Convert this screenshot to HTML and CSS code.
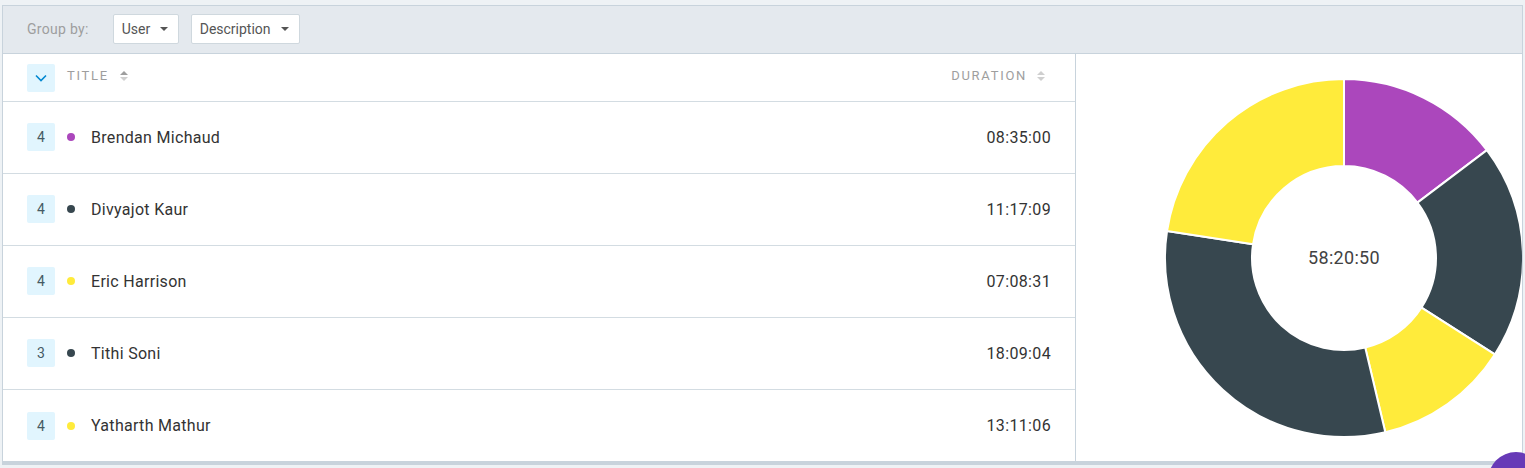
FILE: index.html
```html
<!DOCTYPE html>
<html>
<head>
<meta charset="utf-8">
<link rel="stylesheet" href="styles.css">
</head>
<body>
<div class="app">
  <div class="toolbar">
    <span class="group-label">Group by:</span>
    <div class="select select-user"><span>User</span><span class="caret"></span></div>
    <div class="select"><span>Description</span><span class="caret"></span></div>
  </div>
  <div class="main">
    <div class="table">
      <div class="head">
        <div class="toggle">
          <svg width="12" height="8" viewBox="0 0 12 8"><path d="M1 1.5 L6 6.5 L11 1.5" fill="none" stroke="#0288d1" stroke-width="1.6"/></svg>
        </div>
        <span class="col-title">TITLE</span>
        <span class="sort"><span class="up dark"></span><span class="down"></span></span>
        <span class="spacer"></span>
        <span class="col-dur">DURATION</span>
        <span class="sort"><span class="up"></span><span class="down"></span></span>
      </div>
      <div class="row">
        <span class="badge">4</span><span class="dot purple"></span><span class="name">Brendan Michaud</span><span class="dur">08:35:00</span>
      </div>
      <div class="row">
        <span class="badge">4</span><span class="dot dark"></span><span class="name">Divyajot Kaur</span><span class="dur">11:17:09</span>
      </div>
      <div class="row">
        <span class="badge">4</span><span class="dot yellow"></span><span class="name">Eric Harrison</span><span class="dur">07:08:31</span>
      </div>
      <div class="row">
        <span class="badge">3</span><span class="dot dark"></span><span class="name">Tithi Soni</span><span class="dur">18:09:04</span>
      </div>
      <div class="row last">
        <span class="badge">4</span><span class="dot yellow"></span><span class="name">Yatharth Mathur</span><span class="dur">13:11:06</span>
      </div>
    </div>
    <div class="chart">
      <div class="donut">
        <svg width="360" height="360" viewBox="0 0 360 360">
          <g stroke="#ffffff" stroke-width="2" stroke-linejoin="round">
            <path fill="#ab47bc" d="M180,1 A179,179 0 0 1 322.88,72.17 L253.43,124.58 A92,92 0 0 0 180,88 Z"/>
            <path fill="#37474f" d="M322.88,72.17 A179,179 0 0 1 330.81,276.42 L257.51,229.55 A92,92 0 0 0 253.43,124.58 Z"/>
            <path fill="#ffeb3b" d="M330.81,276.42 A179,179 0 0 1 221.31,354.17 L201.23,269.52 A92,92 0 0 0 257.51,229.55 Z"/>
            <path fill="#37474f" d="M221.31,354.17 A179,179 0 0 1 3.04,153.08 L89.05,166.17 A92,92 0 0 0 201.23,269.52 Z"/>
            <path fill="#ffeb3b" d="M3.04,153.08 A179,179 0 0 1 180,1 L180,88 A92,92 0 0 0 89.05,166.17 Z"/>
          </g>
        </svg>
        <span class="total">58:20:50</span>
      </div>
    </div>
  </div>
</div>
<div class="fab"></div>
</body>
</html>
```

FILE: styles.css
```css
html, body {
  margin: 0;
  padding: 0;
  background: #eef2f5;
  font-family: Roboto, "Liberation Sans", sans-serif;
  overflow: hidden;
}
.app {
  margin: 5px 0 0 2px;
  width: 1521px;
  box-sizing: border-box;
  border: 1px solid #c8d3dc;
  border-bottom: 4px solid #c8d3dc;
  background: #fff;
}
.toolbar {
  height: 48px;
  box-sizing: border-box;
  background: #e4e9ee;
  border-bottom: 1px solid #c8d3dc;
  display: flex;
  align-items: center;
  padding: 0 0 1px 24px;
}
.group-label {
  font-size: 14px;
  letter-spacing: 0.3px;
  color: #9e9e9e;
  margin-right: 24px;
}
.select {
  height: 30px;
  box-sizing: border-box;
  border: 1px solid #cfd8de;
  border-radius: 2px;
  background: #fff;
  display: flex;
  align-items: center;
  padding: 0 10px 0 8px;
  font-size: 14px;
  color: #555;
  margin-right: 12px;
}
.select-user { width: 66px; }
.caret {
  width: 0;
  height: 0;
  border-left: 4px solid transparent;
  border-right: 4px solid transparent;
  border-top: 4px solid #555;
  margin-left: auto;
}
.select span:first-child { margin-right: 10px; }
.main {
  display: flex;
  height: 407px;
}
.table {
  width: 1073px;
  flex: none;
  box-sizing: border-box;
  border-right: 1px solid #c8d3dc;
  background: #fff;
}
.head {
  height: 48px;
  box-sizing: border-box;
  border-bottom: 1px solid #d3dce2;
  display: flex;
  align-items: center;
  padding: 0 30px 0 24px;
}
.toggle {
  width: 28px;
  height: 28px;
  border-radius: 2px;
  background: #e1f5fe;
  display: flex;
  align-items: center;
  justify-content: center;
  margin-right: 12px;
}
.toggle svg { display: block; }
.col-title, .col-dur {
  font-size: 13px;
  letter-spacing: 1.7px;
  color: #9e9e9e;
  margin-bottom: 4px;
}
.sort {
  display: inline-flex;
  flex-direction: column;
  gap: 2px;
  margin-left: 10px;
  margin-bottom: 4px;
}
.sort .up, .sort .down {
  width: 0;
  height: 0;
  border-left: 4px solid transparent;
  border-right: 4px solid transparent;
}
.sort .up { border-bottom: 4px solid #cfcfcf; }
.sort .up.dark { border-bottom-color: #9e9e9e; }
.sort .down { border-top: 4px solid #cfcfcf; }
.col-title + .sort { margin-left: 11px; }
.spacer { flex: 1; }
.row {
  height: 72px;
  box-sizing: border-box;
  border-bottom: 1px solid #d3dce2;
  display: flex;
  align-items: center;
  padding: 0 24px 1px 24px;
}
.row.last {
  height: 71px;
  border-bottom: none;
  padding-bottom: 0;
}
.badge {
  width: 28px;
  height: 28px;
  border-radius: 2px;
  background: #e1f5fe;
  color: #455a64;
  font-size: 14px;
  display: flex;
  align-items: center;
  justify-content: center;
  margin-right: 12px;
}
.dot {
  width: 8px;
  height: 8px;
  border-radius: 50%;
  margin-right: 16px;
}
.dot.purple { background: #ab47bc; }
.dot.dark { background: #37474f; }
.dot.yellow { background: #ffeb3b; }
.name {
  font-size: 16px;
  letter-spacing: 0.3px;
  color: #333;
  flex: 1;
}
.dur {
  font-size: 16px;
  letter-spacing: 0.35px;
  color: #333;
}
.chart {
  flex: 1;
  background: #fff;
  display: flex;
  align-items: center;
  padding-left: 88px;
  overflow: hidden;
}
.donut {
  position: relative;
  width: 360px;
  height: 360px;
  flex: none;
}
.donut svg { display: block; }
.total {
  position: absolute;
  left: 0;
  right: 0;
  top: 0;
  bottom: 0;
  display: flex;
  align-items: center;
  justify-content: center;
  font-size: 18px;
  letter-spacing: 0.3px;
  color: #424242;
}
.fab {
  position: fixed;
  left: 1488px;
  top: 452px;
  width: 56px;
  height: 56px;
  border-radius: 50%;
  background: #673ab7;
}
```
